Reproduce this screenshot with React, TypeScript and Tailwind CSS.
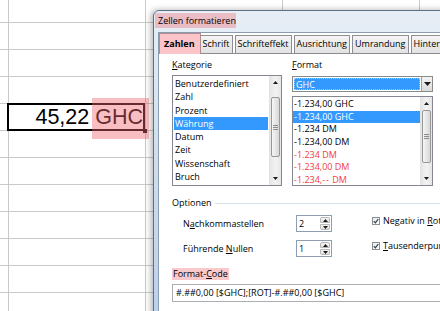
const COL_W = ['w-[9px]', 'w-[137px]', 'w-[137px]', 'w-[137px]', 'w-[30px]'];

const KATEGORIEN = [
  'Benutzerdefiniert',
  'Zahl',
  'Prozent',
  'Währung',
  'Datum',
  'Zeit',
  'Wissenschaft',
  'Bruch',
  'Wahrheitswert',
];

const FORMATE = [
  { t: '-1.234,00 GHC' },
  { t: '-1.234,00 GHC', sel: true },
  { t: '-1.234 DM' },
  { t: '-1.234,00 DM' },
  { t: '-1.234 DM', red: true },
  { t: '-1.234,00 DM', red: true },
  { t: '-1.234,-- DM', red: true },
];

const TABS = ['Schrift', 'Schrifteffekt', 'Ausrichtung', 'Umrandung', 'Hintergrund'];

function Arrow({ dir, big }: { dir: 'up' | 'down'; big?: boolean }) {
  const w = big ? 7 : 5;
  const h = big ? 4 : 3;
  const pts = dir === 'up' ? `${w / 2},0 ${w},${h} 0,${h}` : `0,0 ${w},0 ${w / 2},${h}`;
  return (
    <svg width={w} height={h} viewBox={`0 0 ${w} ${h}`}>
      <polygon points={pts} fill="#1a1a1a" />
    </svg>
  );
}

function ScrollBar({ thumbClass }: { thumbClass: string }) {
  return (
    <div className="w-[12px] shrink-0 flex flex-col bg-linear-to-r from-[#e6e6e6] via-[#f2f2f2] to-[#e6e6e6] border-l border-[#e2e2e2]">
      <div className="h-[13px] shrink-0 flex items-center justify-center">
        <Arrow dir="up" />
      </div>
      <div className="flex-1">
        <div
          className={`${thumbClass} mx-px rounded-[2px] border border-[#979797] bg-linear-to-r from-[#f6f6f6] to-[#d8d8d8] flex flex-col items-center justify-center gap-px`}
        >
          <div className="w-[5px] h-px bg-[#8a8a8a]" />
          <div className="w-[5px] h-px bg-[#8a8a8a]" />
          <div className="w-[5px] h-px bg-[#8a8a8a]" />
        </div>
      </div>
      <div className="h-[13px] shrink-0 flex items-center justify-center">
        <Arrow dir="down" />
      </div>
    </div>
  );
}

function Spin({ value }: { value: string }) {
  return (
    <div className="w-[36px] h-[17px] shrink-0 flex border border-[#8f9db1] bg-white">
      <div className="flex-1 pl-[2px] leading-[15px]">{value}</div>
      <div className="w-[10px] flex flex-col my-px mr-px gap-px">
        <div className="flex-1 flex items-center justify-center border border-[#b8b8b8] bg-linear-to-b from-[#f7f7f7] to-[#e1e1e1] rounded-t-[2px]">
          <Arrow dir="up" />
        </div>
        <div className="flex-1 flex items-center justify-center border border-[#b8b8b8] bg-linear-to-b from-[#f7f7f7] to-[#e1e1e1] rounded-b-[2px]">
          <Arrow dir="down" />
        </div>
      </div>
    </div>
  );
}

function Check({ children }: { children: React.ReactNode }) {
  return (
    <div className="flex items-center gap-[3px] h-[12px] whitespace-nowrap">
      <div className="w-[8px] h-[8px] shrink-0 border border-[#8e8f8f] bg-linear-to-br from-[#e9e9e9] to-white flex items-center justify-center">
        <svg width="6" height="6" viewBox="0 0 6 6">
          <path d="M0.8 3.2 L2.4 4.8 L5.3 1" stroke="#2a3a4a" strokeWidth="1.2" fill="none" />
        </svg>
      </div>
      <span>{children}</span>
    </div>
  );
}

function FormatText({ t }: { t: string }) {
  if (!t.includes('--')) return <>{t}</>;
  const [a, b] = t.split('--');
  return (
    <>
      {a}
      <span className="tracking-[1px]">--</span>
      {b}
    </>
  );
}

export default function App() {
  return (
    <div className="relative w-[440px] h-[311px] overflow-hidden bg-white">
      {/* spreadsheet */}
      <div className="flex flex-col">
        {Array.from({ length: 12 }).map((_, r) => (
          <div
            key={r}
            className={`flex shrink-0 border-b border-[#c9c9c9] ${r === 0 ? 'h-[23px]' : 'h-[27px]'}`}
          >
            {COL_W.map((w, c) => (
              <div key={c} className={`${w} shrink-0 h-full border-r border-[#c9c9c9]`}>
                {r === 4 && c === 1 && (
                  <div className="h-full pr-[2px] text-right leading-[26px] text-[21.5px] text-black font-['Liberation_Sans',Arial,sans-serif]">
                    45,22 GHC
                  </div>
                )}
              </div>
            ))}
          </div>
        ))}
      </div>

      {/* selection + highlight */}
      <div className="absolute left-[7px] top-[103px] w-[138px] h-[28px] border-2 border-black" />
      <div className="absolute left-[143px] top-[129px] w-[4px] h-[4px] bg-black" />
      <div className="absolute left-[92px] top-[98px] w-[57px] h-[41px] bg-[rgba(240,100,110,0.42)]" />

      {/* dialog */}
      <div className="absolute left-[153px] top-[10px] w-[310px] h-[310px] flex flex-col rounded-tl-[6px] border border-[#5f6f82] bg-linear-to-b from-[#e7eef6] via-[#cfdded] to-[#b9d1ee] shadow-[-2px_0_6px_rgba(0,0,0,0.3)] font-['Open_Sans','Noto_Sans',sans-serif] text-[9px] text-black">
        <div className="h-[21px] shrink-0 flex items-start">
          <span className="ml-px mt-[2px] h-[15px] w-[81px] pl-[3px] leading-[15px] whitespace-nowrap bg-[rgba(240,100,110,0.35)]">
            Zellen formatieren
          </span>
        </div>
        <div className="flex-1 flex pl-[4px]">
          <div className="flex-1 flex flex-col bg-white border-l border-t border-[#8b9cb0]">
            {/* tabs */}
            <div className="flex items-end gap-[2px] h-[21px] shrink-0 border-b border-[#898c95]">
              <div className="relative z-10 h-[21px] -mb-px -mr-[3px] pl-[4px] pr-[5px] border border-b-0 border-[#b38a90] bg-[#fac4c8] font-bold leading-[19px] whitespace-nowrap">
                Zahlen
              </div>
              {TABS.map((t) => (
                <div
                  key={t}
                  className="h-[18px] px-[2px] border border-b-0 border-[#8c8e94] bg-linear-to-b from-[#f4f4f4] to-[#e2e2e2] leading-[16px] whitespace-nowrap"
                >
                  {t}
                </div>
              ))}
            </div>

            {/* panel */}
            <div className="flex flex-col pl-[13px] pt-[4px]">
              <div className="flex gap-[10px]">
                <div className="w-[110px] flex flex-col">
                  <div className="h-[14px] leading-[14px]">
                    <u className="underline">K</u>ategorie
                  </div>
                  <div className="mt-[3px] h-[111px] flex border border-[#828790]">
                    <div className="flex-1 overflow-hidden p-px">
                      {KATEGORIEN.map((k) => (
                        <div
                          key={k}
                          className={`h-[13.3px] leading-[13.3px] pl-px whitespace-nowrap ${k === 'Währung' ? 'bg-[#3399ff] text-white' : ''}`}
                        >
                          {k}
                        </div>
                      ))}
                    </div>
                    <ScrollBar thumbClass="mt-[8px] h-[60px]" />
                  </div>
                </div>

                <div className="w-[141px] flex flex-col">
                  <div className="h-[14px] leading-[14px]">
                    <u className="underline">F</u>ormat
                  </div>
                  <div className="mt-[4px] h-[16px] flex border border-[#8a8a8a] bg-white">
                    <div className="flex-1 m-px bg-[#3399ff] text-white leading-[12px] pl-px border border-dotted border-[#9fc9f5]">
                      GHC
                    </div>
                    <div className="w-[11px] flex items-center justify-center border-l border-[#a0a0a0] bg-linear-to-b from-[#f4f4f4] to-[#dadada]">
                      <Arrow dir="down" big />
                    </div>
                  </div>
                  <div className="mt-[4px] h-[90px] flex border border-[#828790]">
                    <div className="flex-1 overflow-hidden py-px">
                      {FORMATE.map((f, i) => (
                        <div
                          key={i}
                          className={`h-[12.7px] leading-[12.7px] pl-px whitespace-nowrap ${
                            f.sel ? 'bg-[#3399ff] text-white' : f.red ? 'text-[#f23c3c]' : ''
                          }`}
                        >
                          <FormatText t={f.t} />
                        </div>
                      ))}
                    </div>
                    <ScrollBar thumbClass="mt-0 h-[53px]" />
                  </div>
                </div>
              </div>

              {/* Optionen */}
              <div className="mt-[10px] h-[14px] flex items-center gap-[3px]">
                <span className="leading-[14px]">Optionen</span>
                <div className="flex-1 h-px bg-[#d5dfe5]" />
              </div>

              <div className="mt-[5px] flex items-start">
                <div className="w-[124px] pl-[11px] h-[17px] leading-[17px] whitespace-nowrap">
                  N<u className="underline">a</u>chkommastellen
                </div>
                <Spin value="2" />
                <div className="ml-[40px]">
                  <Check>
                    Negativ in <u className="underline">R</u>ot
                  </Check>
                </div>
              </div>

              <div className="mt-[8px] flex items-start">
                <div className="w-[124px] pl-[11px] h-[17px] leading-[17px] whitespace-nowrap">
                  Führende <u className="underline">N</u>ullen
                </div>
                <Spin value="1" />
                <div className="ml-[40px]">
                  <Check>
                    <u className="underline">T</u>ausenderpunkt
                  </Check>
                </div>
              </div>

              <div className="mt-[11px] flex">
                <span className="h-[12px] leading-[12px] px-px bg-[rgba(240,100,110,0.35)] whitespace-nowrap">
                  Format-<u className="underline">C</u>ode
                </span>
              </div>

              <div className="mt-[4px] h-[18px] border border-[#abadb3] pl-[3px] leading-[16px] whitespace-nowrap">
                #.##0,00 [$GHC];[ROT]-#.##0,00 [$GHC]
              </div>
            </div>
          </div>
        </div>
      </div>
    </div>
  );
}
